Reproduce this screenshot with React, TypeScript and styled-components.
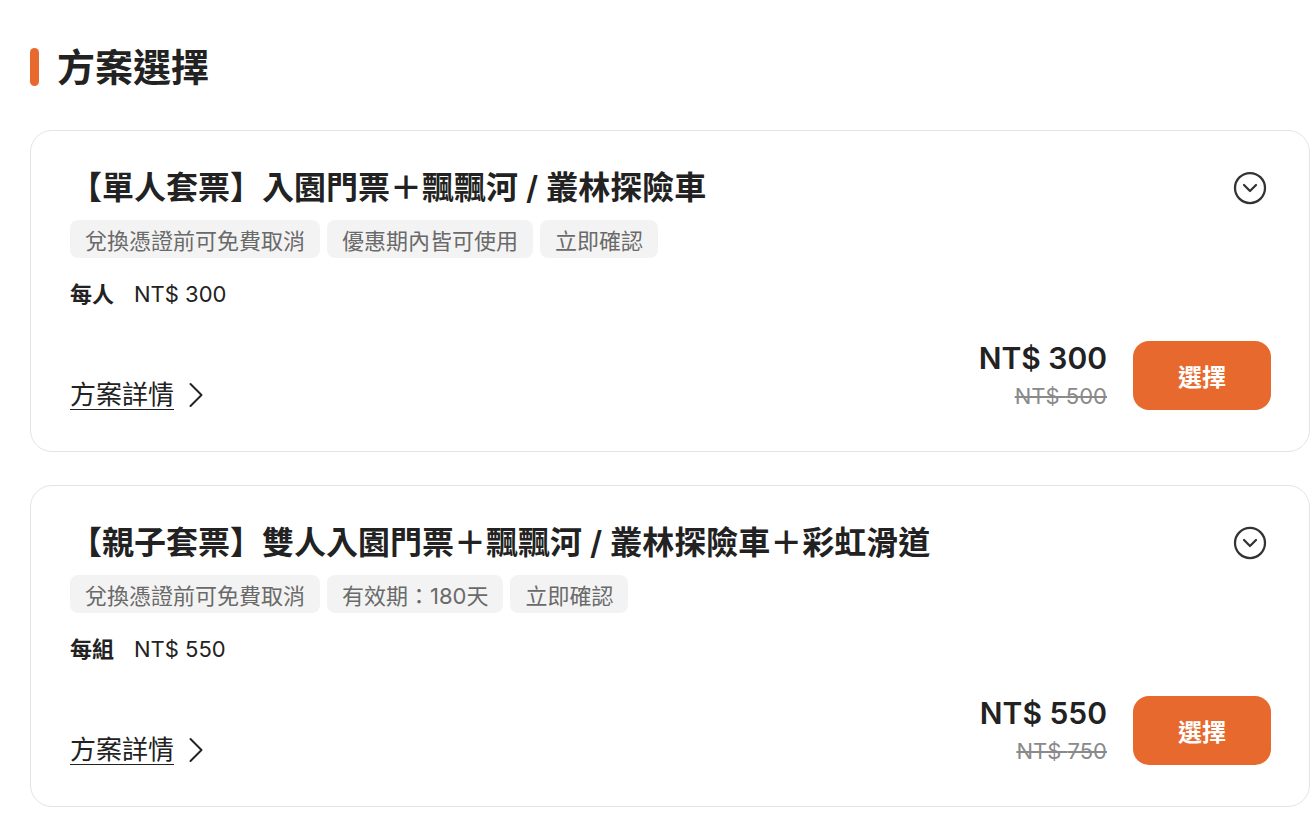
import React from "react";
import styled, { createGlobalStyle } from "styled-components";
import { CircleChevronDown } from "lucide-react";

const orange = "#e8692d";
const dark = "#222222";

const GlobalStyle = createGlobalStyle`
  body {
    margin: 0;
    background: #ffffff;
    font-family: "Inter", "Noto Sans CJK TC", sans-serif;
    color: ${dark};
  }
`;

const Page = styled.main`
  padding: 48px 6px 14px 30px;
`;

const Heading = styled.div`
  display: flex;
  align-items: center;
  gap: 18px;
  height: 38px;
  margin-bottom: 44px;
`;

const HeadingBar = styled.span`
  width: 9px;
  height: 38px;
  border-radius: 5px;
  background: ${orange};
`;

const HeadingText = styled.h2`
  margin: 0;
  font-size: 38px;
  font-weight: 700;
  line-height: 38px;
`;

const CardList = styled.div`
  display: flex;
  flex-direction: column;
  gap: 33px;
`;

const Card = styled.section`
  width: 1280px;
  box-sizing: border-box;
  border: 1px solid #e4e4e4;
  border-radius: 22px;
  padding: 33px 38px 38px 39px;
`;

const CardHeader = styled.div`
  display: flex;
  align-items: center;
  justify-content: space-between;
`;

const CardTitle = styled.h3`
  margin: 0;
  font-size: 32px;
  font-weight: 600;
  line-height: 48px;
`;

const ToggleIcon = styled(CircleChevronDown)`
  color: #333333;
  margin-right: 3px;
`;

const TagRow = styled.div`
  display: flex;
  gap: 7px;
  margin-top: 8px;
`;

const Tag = styled.span`
  display: inline-flex;
  align-items: center;
  height: 38px;
  padding: 0 15px;
  border-radius: 8px;
  background: #f3f3f3;
  color: #6a6a6a;
  font-size: 22px;
`;

const UnitLine = styled.div`
  display: flex;
  gap: 20px;
  margin-top: 21px;
  font-size: 22px;
  line-height: 30px;
`;

const UnitLabel = styled.span`
  font-weight: 600;
`;

const BottomRow = styled.div`
  display: flex;
  align-items: flex-end;
  justify-content: space-between;
  margin-top: 28px;
`;

const DetailsLink = styled.a`
  display: flex;
  align-items: center;
  gap: 14px;
  font-size: 26px;
  line-height: 36px;
  color: ${dark};
  cursor: pointer;

  span {
    text-decoration: underline;
    text-underline-offset: 5px;
    text-decoration-thickness: 1px;
  }
`;

const PriceGroup = styled.div`
  display: flex;
  align-items: center;
  gap: 26px;
`;

const PriceBlock = styled.div`
  display: flex;
  flex-direction: column;
  align-items: flex-end;
`;

const Price = styled.span`
  font-size: 30px;
  font-weight: 600;
  line-height: 42px;
`;

const OldPrice = styled.span`
  font-size: 22px;
  line-height: 34px;
  color: #8a8a8a;
  text-decoration: line-through;
`;

const SelectButton = styled.button`
  width: 138px;
  height: 69px;
  border: none;
  border-radius: 16px;
  background: ${orange};
  color: #ffffff;
  font-family: inherit;
  font-size: 24px;
  font-weight: 700;
  cursor: pointer;
`;

type Plan = {
  title: string;
  tags: string[];
  unit: string;
  price: number;
  original: number;
};

const plans: Plan[] = [
  {
    title: "【單人套票】入園門票＋飄飄河 / 叢林探險車",
    tags: ["兌換憑證前可免費取消", "優惠期內皆可使用", "立即確認"],
    unit: "每人",
    price: 300,
    original: 500,
  },
  {
    title: "【親子套票】雙人入園門票＋飄飄河 / 叢林探險車＋彩虹滑道",
    tags: ["兌換憑證前可免費取消", "有效期：180天", "立即確認"],
    unit: "每組",
    price: 550,
    original: 750,
  },
];

const Chevron = () => (
  <svg width="16" height="26" viewBox="0 0 16 26" fill="none">
    <polyline
      points="2.5,2 13.5,13 2.5,24"
      stroke={dark}
      strokeWidth="2"
      strokeLinecap="round"
      strokeLinejoin="round"
    />
  </svg>
);

const PlanCard = ({ plan }: { plan: Plan }) => (
  <Card>
    <CardHeader>
      <CardTitle>{plan.title}</CardTitle>
      <ToggleIcon size={36} strokeWidth={1.5} />
    </CardHeader>
    <TagRow>
      {plan.tags.map((tag) => (
        <Tag key={tag}>{tag}</Tag>
      ))}
    </TagRow>
    <UnitLine>
      <UnitLabel>{plan.unit}</UnitLabel>
      <span>NT$ {plan.price}</span>
    </UnitLine>
    <BottomRow>
      <DetailsLink>
        <span>方案詳情</span>
        <Chevron />
      </DetailsLink>
      <PriceGroup>
        <PriceBlock>
          <Price>NT$ {plan.price}</Price>
          <OldPrice>NT$ {plan.original}</OldPrice>
        </PriceBlock>
        <SelectButton>選擇</SelectButton>
      </PriceGroup>
    </BottomRow>
  </Card>
);

const App = () => (
  <>
    <GlobalStyle />
    <Page>
      <Heading>
        <HeadingBar />
        <HeadingText>方案選擇</HeadingText>
      </Heading>
      <CardList>
        {plans.map((plan) => (
          <PlanCard key={plan.title} plan={plan} />
        ))}
      </CardList>
    </Page>
  </>
);

export default App;
